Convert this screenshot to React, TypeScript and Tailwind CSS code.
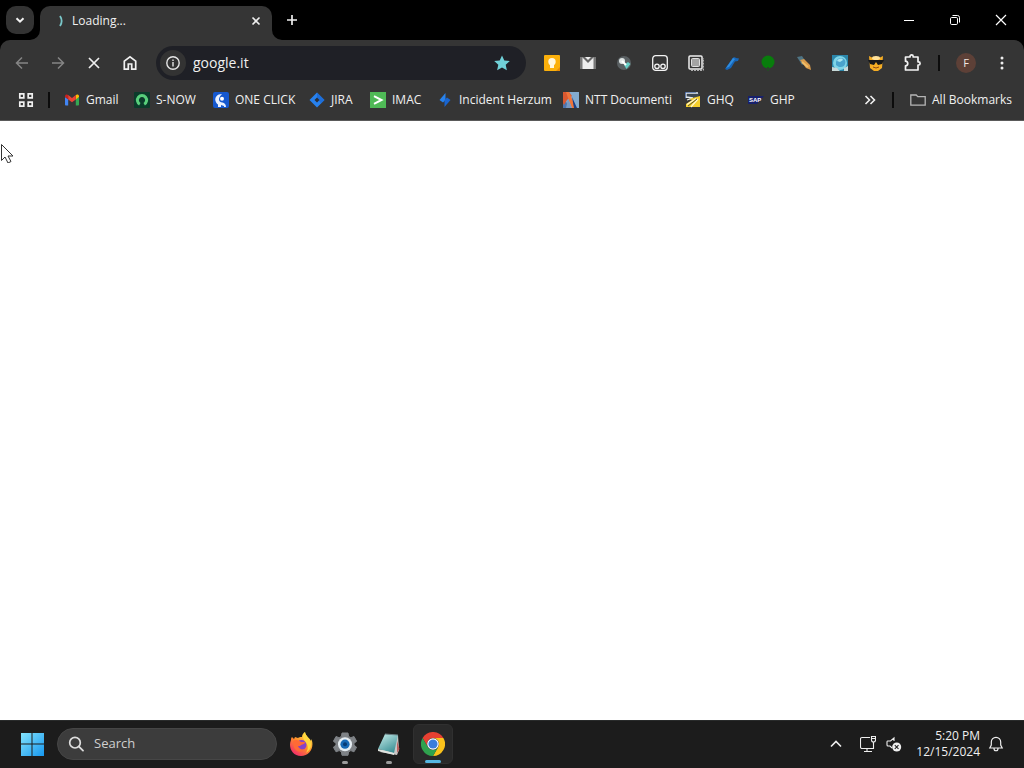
import type { ReactNode } from "react";

const icon = "block size-4 shrink-0";

function ChevronDown() {
  return (
    <svg className={icon} viewBox="0 0 16 16" fill="none" stroke="#f2f2f2" strokeWidth="2">
      <path d="M4.5 6.2 8 9.7l3.5-3.5" />
    </svg>
  );
}

function GmailIcon() {
  return (
    <svg className={icon} viewBox="0 0 16 16">
      <path d="M1 5v7.5c0 .5.4 1 1 1h2.2V7.2z" fill="#4285f4" />
      <path d="M15 5v7.5c0 .5-.4 1-1 1h-2.2V7.2z" fill="#34a853" />
      <path d="M1 5v-.8C1 2.5 3 2 4.2 3v4.4z" fill="#c5221f" />
      <path d="M15 5v-.8c0-1.7-2-2.2-3.2-1.2v4.4z" fill="#fbbc04" />
      <path d="M4.2 3 8 6l3.8-3v4.4L8 10.3 4.2 7.4z" fill="#ea4335" />
    </svg>
  );
}

function SnowIcon() {
  return (
    <svg className={icon} viewBox="0 0 16 16">
      <rect width="16" height="16" rx="1" fill="#0b3b2b" />
      <path d="M5.8 12.2a4.600 4.600 0 1 1 4.400 0" fill="none" stroke="#58cf7b" strokeWidth="3" />
    </svg>
  );
}

function OneClickIcon() {
  return (
    <svg className={icon} viewBox="0 0 16 16">
      <rect width="16" height="16" rx="2" fill="#1558cf" />
      <path d="M9 2C4 2 1.5 5.500 2.500 9c.6 2 1.500 3 2.500 3.500V15h3v-2l3 1v1h2c0-2.500-1.500-4-3.500-4.500C5.800 10.500 4.200 6.500 9 2" fill="#e9f1ff" />
      <circle cx="9" cy="6.800" r="2" fill="#fff" />
    </svg>
  );
}

function JiraIcon() {
  return (
    <svg className={icon} viewBox="0 0 16 16">
      <path d="M8 .5 15.5 8 8 15.500.5 8z" fill="#2781ee" />
      <path d="M8 .5 15.5 8 12 11.500 8 5.500z" fill="#1763cc" opacity=".6" />
      <path d="M8 5.500 10.500 8 8 10.500 5.500 8z" fill="#292e38" />
    </svg>
  );
}

function ImacIcon() {
  return (
    <svg className={icon} viewBox="0 0 16 16">
      <rect width="16" height="16" fill="#4fb956" />
      <path d="M4 4.200 11.500 8 4 11.800" fill="none" stroke="#fff" strokeWidth="2" />
    </svg>
  );
}

function HerzumIcon() {
  return (
    <svg className={icon} viewBox="0 0 16 16">
      <path d="M8.500 1v7L6 10.500 2.500 8z" fill="#2782ed" />
      <path d="M7.500 15V8L10 5.500l3.500 2.500z" fill="#1865d1" />
    </svg>
  );
}

function NttIcon() {
  return (
    <svg className={icon} viewBox="0 0 16 16">
      <rect width="16" height="16" fill="#83abd0" />
      <path d="M0 3 6 16H0z" fill="#4c74ae" />
      <path d="M0 0h6l3 4-5 4-3 5-1-2z" fill="#d95830" />
      <path d="M3 0h3l7 16H9L5 6z" fill="#ef743a" />
      <path d="M5 7 9 16H3z" fill="#7898c0" />
      <path d="M9 5 14 16h-3z" fill="#173e88" />
    </svg>
  );
}

function GhqIcon() {
  return (
    <svg className={icon} viewBox="0 0 16 16">
      <path d="M1 1h14l-3 5H1z" fill="#3c4650" />
      <path d="M1 6V1h12M1 5l7 1-6 2" fill="none" stroke="#e8edf1" strokeWidth="1.300" />
      <path d="M0 7V0h11" fill="none" stroke="#2455a8" />
      <path d="M4 7 15 4v11H1v-3l6-4z" fill="#f5cf2d" />
      <path d="m2 12.500 9-6M6 15l7-8" fill="none" stroke="#fff6cf" strokeWidth="1.200" />
      <path d="m3 14 9-7" fill="none" stroke="#5a5530" />
    </svg>
  );
}

function SapIcon() {
  return (
    <svg className={icon} viewBox="0 0 16 16">
      <path d="M0 4h16l-7 8H0z" fill="#17206c" />
      <text x="1" y="10" fill="#fff" fontSize="6" fontWeight="700" fontFamily="Liberation Sans, sans-serif">SAP</text>
    </svg>
  );
}

const bookmarks: { label: string; width: string; art: ReactNode }[] = [
  { label: "Gmail", width: "min-w-[70px]", art: <GmailIcon /> },
  { label: "S-NOW", width: "min-w-[79px]", art: <SnowIcon /> },
  { label: "ONE CLICK", width: "min-w-[96px]", art: <OneClickIcon /> },
  { label: "JIRA", width: "min-w-[61px]", art: <JiraIcon /> },
  { label: "IMAC", width: "min-w-[67px]", art: <ImacIcon /> },
  { label: "Incident Herzum", width: "min-w-[126px]", art: <HerzumIcon /> },
  { label: "NTT Documenti", width: "min-w-[122px]", art: <NttIcon /> },
  { label: "GHQ", width: "min-w-[63px]", art: <GhqIcon /> },
  { label: "GHP", width: "min-w-12", art: <SapIcon /> },
];

const extensions: { label: string; art: ReactNode }[] = [
  {
    label: "Keep",
    art: (
      <svg className={icon} viewBox="0 0 16 16">
        <rect width="16" height="16" rx="1" fill="#fbb00b" />
        <path d="M12 16h4v-4z" fill="#e88b05" />
        <circle cx="8" cy="6.800" r="3.700" fill="#fff7df" />
        <path d="M6 10h4v3H6z" fill="#fff7df" />
      </svg>
    ),
  },
  {
    label: "Mail checker",
    art: (
      <svg className={icon} viewBox="0 0 16 16">
        <rect y="2" width="16" height="12" rx="1" fill="#eee" />
        <path d="M0 2h2.500v12H0zM13.500 2H16v12h-2.500z" fill="#777" />
        <path d="M2 2h12L8 8z" fill="#666" />
        <path d="m5 2 3 3 3-3z" fill="#eee" />
      </svg>
    ),
  },
  {
    label: "Disc",
    art: (
      <svg className={icon} viewBox="0 0 16 16">
        <circle cx="8" cy="8" r="7" fill="#5a6063" />
        <circle cx="6" cy="6" r="3" fill="#dfe5e5" />
        <path d="m8 10 4-3 2.500 2-4 5z" fill="#65cfc7" />
        <path d="m6 6 4 4" stroke="#fff" strokeWidth="2" />
      </svg>
    ),
  },
  {
    label: "Recorder",
    art: (
      <svg className={icon} viewBox="0 0 16 16" fill="none" stroke="#f4f4f4" strokeWidth="1.300">
        <rect x=".7" y=".7" width="14.600" height="14.600" rx="3" />
        <circle cx="5" cy="11.300" r="2.200" />
        <circle cx="11" cy="11.300" r="2.200" />
      </svg>
    ),
  },
  {
    label: "Capture",
    art: (
      <svg className={icon} viewBox="0 0 16 16">
        <rect x="1" y="1" width="13" height="13" rx="1" fill="none" stroke="#eee" strokeWidth="1.500" />
        <rect x="3.500" y="3.500" width="8" height="8" rx="1" fill="#a3a3a3" stroke="#ddd" />
        <path d="M3 15.300h12.300V3" fill="none" stroke="#ccc" strokeDasharray="2 1" />
      </svg>
    ),
  },
  {
    label: "Marker",
    art: (
      <svg className={icon} viewBox="0 0 16 16">
        <path d="m1 14 7-10c1-2 3-2 4-1l3 .5-1 2.500-3 .5-4 6.500-4 2z" fill="#1765b6" />
        <path d="m2 13 7-10 2 1-6 8z" fill="#2f8de0" />
      </svg>
    ),
  },
  {
    label: "Status",
    art: (
      <svg className={icon} viewBox="0 0 16 16">
        <circle cx="8" cy="7" r="6.500" fill="#087d0c" />
        <path d="M7 12h2v4H7z" fill="#274728" />
      </svg>
    ),
  },
  {
    label: "Brush",
    art: (
      <svg className={icon} viewBox="0 0 16 16">
        <path d="m1 2 5-1 4 6-4 3z" fill="#4f7484" />
        <path d="m4 5 4-1 6 6 1 5-5-2z" fill="#d99a4a" />
        <path d="m6 7 6 5" stroke="#f0bd68" strokeWidth="2" />
      </svg>
    ),
  },
  {
    label: "Globe",
    art: (
      <svg className={icon} viewBox="0 0 16 16">
        <rect width="16" height="16" fill="#2b86aa" />
        <circle cx="8" cy="8" r="7" fill="#7ed5e8" />
        <path d="M4 7c1-4 5-5 8-3 2 2 2 4 0 7-3 2-6 1-8-1z" fill="#4aa3cc" />
        <path d="M5 6c2-3 5-3 6-1L8 7z" fill="#a8e5f0" />
        <path d="m0 12 5 1 3 3H0zM12 13l4-2v5h-4z" fill="#c7d8d8" />
      </svg>
    ),
  },
  {
    label: "Sunglasses",
    art: (
      <svg className={icon} viewBox="0 0 16 16">
        <path d="M1 1 5 3h6l4-2-1 12-4 3H6l-4-3z" fill="#f5ad24" />
        <ellipse cx="8" cy="3" rx="4" ry="2" fill="#ffe19a" />
        <path d="M0 5h16l-2 4-4 1-2-3-2 3-4-1z" fill="#17191b" />
        <path d="M5 12q3 2 6 0" fill="none" stroke="#8d4b14" />
      </svg>
    ),
  },
  {
    label: "Extensions",
    art: (
      <svg className="block size-5 shrink-0" viewBox="0 0 20 20" fill="none" stroke="#f3f3f3" strokeWidth="1.700" strokeLinejoin="round">
        <path d="M3.500 4H8v-.5a1.600 1.600 0 0 1 3.200 0V4H16v4.800h.5a1.600 1.600 0 0 1 0 3.200H16v5H3.500v-4.200c3 0 3-4.600 0-4.600z" />
      </svg>
    ),
  },
];

function TabStrip() {
  return (
    <header className="flex h-10 items-end bg-black">
      <button aria-label="Search tabs" className="mx-1.5 flex size-7 shrink-0 items-center justify-center self-center rounded-[10px] bg-[#333]">
        <ChevronDown />
      </button>
      <div className="relative flex h-[34px] w-[232px] items-center rounded-t-[10px] bg-[#353535] pb-1 pl-3 pr-2">
        <svg className="absolute bottom-0 -left-2.5 size-2.5" viewBox="0 0 10 10"><path d="M10 0v10H0A10 10 0 0 0 10 0" fill="#353535" /></svg>
        <svg className="absolute bottom-0 -right-2.5 size-2.5" viewBox="0 0 10 10"><path d="M0 0v10h10A10 10 0 0 1 0 0" fill="#353535" /></svg>
        <svg className="size-4" viewBox="0 0 16 16" fill="none" stroke="#79c6c8" strokeWidth="1.800">
          <path d="M8 3c2 3 2 7 0 10" />
        </svg>
        <span className="ml-1 text-xs text-[#f0f0f0]">Loading...</span>
        <button aria-label="Close tab" className="ml-auto flex size-4 items-center justify-center">
          <svg className={icon} viewBox="0 0 16 16" stroke="#eee" strokeWidth="1.600"><path d="m4.500 4.500 7 7m0-7-7 7" /></svg>
        </button>
      </div>
      <button aria-label="New tab" className="ml-1.5 flex size-7 shrink-0 items-center justify-center self-center">
        <svg className={icon} viewBox="0 0 16 16" stroke="#eee" strokeWidth="1.700"><path d="M3 8h10M8 3v10" /></svg>
      </button>
      <div className="ml-auto flex h-10 shrink-0">
        <button aria-label="Minimize" className="flex w-[46px] items-center justify-center">
          <svg className={icon} viewBox="0 0 16 16" stroke="#fff"><path d="M3 8.500h10" /></svg>
        </button>
        <button aria-label="Restore" className="flex w-[46px] items-center justify-center">
          <svg className={icon} viewBox="0 0 16 16" fill="none" stroke="#fff">
            <rect x="3.500" y="5.500" width="7" height="7" rx="1.200" /><path d="M5.500 3.500h5a2 2 0 0 1 2 2v5" />
          </svg>
        </button>
        <button aria-label="Close" className="flex w-[46px] items-center justify-center">
          <svg className={icon} viewBox="0 0 16 16" stroke="#fff" strokeWidth="1.200"><path d="m3 3 10 10m0-10L3 13" /></svg>
        </button>
      </div>
    </header>
  );
}

const navButton = "flex h-9 w-9 shrink-0 items-center justify-center";

function Toolbar() {
  return (
    <div className="flex h-[46px] items-center px-1">
      <button aria-label="Back" className={navButton}>
        <svg className={icon} viewBox="0 0 16 16" fill="none" stroke="#858585" strokeWidth="1.500"><path d="M14 8H2.500M8 2.500 2.500 8 8 13.500" /></svg>
      </button>
      <button aria-label="Forward" className={navButton}>
        <svg className={icon} viewBox="0 0 16 16" fill="none" stroke="#858585" strokeWidth="1.500"><path d="M2 8h11.500M8 2.500 13.500 8 8 13.500" /></svg>
      </button>
      <button aria-label="Stop" className={navButton}>
        <svg className={icon} viewBox="0 0 16 16" stroke="#eee" strokeWidth="1.700"><path d="m3 3 10 10m0-10L3 13" /></svg>
      </button>
      <button aria-label="Home" className={navButton}>
        <svg className={icon} viewBox="0 0 16 16" fill="none" stroke="#f0f0f0" strokeWidth="1.700"><path d="M2.300 6.200 8 1.800l5.700 4.400v7.900H9.700V9H6.300v5.100h-4z" /></svg>
      </button>
      <div className="mx-2 flex h-[34px] min-w-0 flex-1 items-center rounded-full bg-[#1f2026] pl-1 pr-4">
        <button aria-label="Site information" className="flex size-[26px] shrink-0 items-center justify-center rounded-full bg-[#333]">
          <svg className={icon} viewBox="0 0 16 16" fill="none" stroke="#e6e6e6" strokeWidth="1.400"><circle cx="8" cy="8" r="6.200" /><path d="M8 7v4.500M8 4.500V6" /></svg>
        </button>
        <input aria-label="Address" defaultValue="google.it" className="ml-[7px] min-w-0 flex-1 bg-transparent text-sm leading-5 text-[#f0f0f0] outline-none" />
        <button aria-label="Edit bookmark" className="shrink-0">
          <svg className={icon} viewBox="0 0 16 16" fill="#70d1d8"><path d="m8 .5 2.300 5 5.500.6-4.100 3.600 1.200 5.500L8 12.400l-4.900 2.800 1.200-5.500L.2 6.100l5.500-.6z" /></svg>
        </button>
      </div>
      {extensions.map((item) => (
        <button key={item.label} aria-label={item.label} className={navButton}>{item.art}</button>
      ))}
      <span className="mx-2 h-4 w-0.5 shrink-0 bg-[#0c0c0c]" />
      <button aria-label="Profile" className={navButton}>
        <span className="flex size-5 items-center justify-center rounded-full bg-[#5d4037] text-[11px] text-[#f3e7e3]">F</span>
      </button>
      <button aria-label="Menu" className={navButton}>
        <svg className={icon} viewBox="0 0 16 16" fill="#eee"><circle cx="8" cy="3" r="1.500" /><circle cx="8" cy="8" r="1.500" /><circle cx="8" cy="13" r="1.500" /></svg>
      </button>
    </div>
  );
}

function BookmarksBar() {
  return (
    <nav aria-label="Bookmarks" className="flex h-[34px] items-center pb-1.5 pl-[18px] pr-3 text-xs text-[#f0f0f0]">
      <button aria-label="Apps" className="shrink-0">
        <svg className={icon} viewBox="0 0 16 16" fill="none" stroke="#f0f0f0" strokeWidth="1.700">
          <path d="M1.800 1.800h4v4h-4zM10.200 1.800h4v4h-4zM1.800 10.200h4v4h-4zM10.200 10.200h4v4h-4z" />
        </svg>
      </button>
      <span className="mx-3.5 h-4 w-0.5 shrink-0 bg-[#0c0c0c]" />
      {bookmarks.map((item) => (
        <a key={item.label} href="#" className={"flex shrink-0 items-center gap-1.5 whitespace-nowrap " + item.width}>
          {item.art}
          {item.label}
        </a>
      ))}
      <button aria-label="More bookmarks" className="ml-auto shrink-0">
        <svg className={icon} viewBox="0 0 16 16" fill="none" stroke="#f0f0f0" strokeWidth="1.600"><path d="M3.500 4 7.500 8l-4 4M8.500 4l4 4-4 4" /></svg>
      </button>
      <span className="ml-3.5 mr-4 h-4 w-0.5 shrink-0 bg-[#0c0c0c]" />
      <button className="flex shrink-0 items-center gap-1.5 whitespace-nowrap">
        <svg className={icon} viewBox="0 0 16 16" fill="none" stroke="#b5b5b5" strokeWidth="1.300"><path d="M.8 13.200V3h5.400l1.600 1.700h7.400v8.500z" /></svg>
        All Bookmarks
      </button>
    </nav>
  );
}

function Taskbar() {
  return (
    <footer className="flex h-12 shrink-0 items-center bg-[#1c1c1c] text-[#f0f0f0] inset-shadow-[0_1px_#292b2b]">
      <button aria-label="Start" className="ml-5 shrink-0">
        <svg className="block size-6" viewBox="0 0 24 24">
          <defs><linearGradient id="start" x1="0" y1="0" x2="1" y2="1"><stop stopColor="#83e3fc" /><stop offset="1" stopColor="#1697ef" /></linearGradient></defs>
          <path d="M1 1h10.500v10.500H1zM12.500 1H24v10.500H12.500zM1 12.500h10.500V24H1zM12.500 12.500H24V24H12.500z" fill="url(#start)" />
        </svg>
      </button>
      <label className="ml-[13px] flex h-8 w-[220px] items-center rounded-full border border-[#464646] bg-[#3c3c3c] pl-2.5">
        <svg className={icon} viewBox="0 0 16 16" fill="none" stroke="#dedede" strokeWidth="1.700" strokeLinecap="round"><circle cx="7" cy="6.700" r="5.300" /><path d="m11 10.700 4 4" /></svg>
        <input aria-label="Search" placeholder="Search" className="ml-2.5 min-w-0 flex-1 bg-transparent text-[13px] outline-none placeholder:text-[#cfcfcf]" />
      </label>
      <div className="ml-0.5 flex h-full shrink-0">
        <button aria-label="Firefox" className="flex w-11 items-center justify-center">
          <svg className="block size-6" viewBox="0 0 24 24">
            <defs><linearGradient id="fox" x1=".85" y1="0" x2=".15" y2="1"><stop stopColor="#fff04a" /><stop offset=".5" stopColor="#ff8b2a" /><stop offset="1" stopColor="#f01f72" /></linearGradient></defs>
            <path d="M3 5c-1 1-1 2-1 3-3 7 1 16 10 16 8 0 13-8 11-15l-1-2v2c-1-3-5-4-6-9-2 1-3 3-3 5-2 0-3 0-4 1L6 5 5 7z" fill="url(#fox)" />
            <circle cx="12.500" cy="13" r="5" fill="#8642c8" />
            <path d="M4 9c3-2 6-1 8 1h4c0 2-2 2-4 3 0 1-2 1-3 1 1 3 4 4 7 3-3 4-8 3-10 0-2-2-1-5-2-8" fill="#ff6a35" />
            <path d="M16 0c0 4 6 6 6 13 0 3-2 6-5 8 3-5 2-8-1-12-2-2-3-5 0-9" fill="#ffd83e" />
          </svg>
        </button>
        <button aria-label="Settings" className="relative flex w-11 items-center justify-center">
          <svg className="block size-6" viewBox="0 0 24 24">
            <path d="m9 1-.6 3.400-2.200 1.300L3 4.500l-2.600 4.800L3 11.200v2L.4 15.200 3 19.800l3.200-1.200 2.200 1.300L9 23.300h6l.6-3.400 2.200-1.300 3.200 1.200 2.600-4.600-2.600-2v-2l2.600-1.900L21 4.500l-3.200 1.200-2.200-1.300L15 1z" fill="#7e8286" stroke="#7e8286" strokeLinejoin="round" />
            <circle cx="12" cy="12.200" r="7" fill="#e5edf2" />
            <circle cx="12" cy="12.200" r="4.600" fill="#1769b5" />
            <circle cx="12" cy="12.200" r="2" fill="#073b75" />
          </svg>
          <span className="absolute bottom-1 h-[3px] w-1.5 rounded-full bg-[#9b9b9b]" />
        </button>
        <button aria-label="Notepad" className="relative flex w-11 items-center justify-center">
          <svg className="block size-6" viewBox="0 0 24 24">
            <defs><linearGradient id="pad" x1=".2" y1="0" x2=".8" y2="1"><stop stopColor="#bde6e4" /><stop offset="1" stopColor="#338b91" /></linearGradient></defs>
            <path d="m3 20 17 3 2-5-1-15z" fill="#c8c6c5" />
            <path d="m20 9 2.500 8-2.500 4z" fill="#b9605e" />
            <path d="M8 2 21 3l-4 18L1 17z" fill="url(#pad)" />
            <path d="m1 17 16 4v2L1 19z" fill="#e1e4df" />
            <path d="M8 2 21 3" stroke="#687e82" />
          </svg>
          <span className="absolute bottom-1 h-[3px] w-1.5 rounded-full bg-[#9b9b9b]" />
        </button>
        <div className="flex w-11 items-center justify-center">
          <button aria-label="Google Chrome" className="relative flex h-10 w-10 shrink-0 items-center justify-center rounded-md border border-[#303030] bg-[#292929]">
            <svg className="block size-6" viewBox="0 0 24 24">
              <path d="M1.600 6A12 12 0 0 1 22.400 6H12a6 6 0 0 0-5.200 9z" fill="#e64032" />
              <path d="M22.400 6A12 12 0 0 1 12 24l5.200-9A6 6 0 0 0 12 6z" fill="#fbc21b" />
              <path d="M1.600 6 6.800 15a6 6 0 0 0 10.400 0L12 24A12 12 0 0 1 1.600 6" fill="#2fa24e" />
              <circle cx="12" cy="12" r="5.800" fill="#fff" /><circle cx="12" cy="12" r="4.600" fill="#397ddd" />
            </svg>
            <span className="absolute bottom-0 h-[3px] w-4 rounded-full bg-[#55b7e2]" />
          </button>
        </div>
      </div>
      <div className="ml-auto flex shrink-0 items-center pr-5">
        <button aria-label="Show hidden icons"><svg className={icon} viewBox="0 0 16 16" fill="none" stroke="#eee" strokeWidth="1.600"><path d="m3 10.500 5-5 5 5" /></svg></button>
        <button aria-label="Network" className="ml-4">
          <svg className={icon} viewBox="0 0 16 16" fill="none" stroke="#eee" strokeWidth="1.100">
            <path d="M10 1.500H2a1.500 1.500 0 0 0-1.500 1.500v8A1.500 1.500 0 0 0 2 12.500h11.500V7M7 12.500v3M4 15.500h8" />
            <path d="M11.500.5h4v3.500a2 2 0 0 1-4 0zM13.500 6v2M11.500 2.500h4" />
          </svg>
        </button>
        <button aria-label="Volume" className="ml-2.5">
          <svg className={icon} viewBox="0 0 16 16" fill="none" stroke="#eee" strokeWidth="1.100">
            <path d="M8 5V2L4.500 5H1.500Q1 5 1 6v3q0 1 1 1h2l2 2" /><circle cx="10.700" cy="11" r="4.500" fill="#f0f0f0" stroke="none" /><path d="m8.800 9.200 3.700 3.700m0-3.700-3.700 3.700" stroke="#222" />
          </svg>
        </button>
        <time className="ml-3.5 text-right text-xs leading-4">5:20 PM<br />12/15/2024</time>
        <button aria-label="Notifications" className="ml-2">
          <svg className={icon} viewBox="0 0 16 16" fill="none" stroke="#eee" strokeWidth="1.200"><path d="M3.300 9V6a4.700 4.700 0 0 1 9.400 0v3l1.500 3H1.800zM6 12.500c0 3 4 3 4 0" /></svg>
        </button>
      </div>
    </footer>
  );
}

export default function App() {
  return (
    <div className="flex min-h-screen flex-col bg-black font-['Open_Sans','Noto_Sans',sans-serif]">
      <TabStrip />
      <div className="rounded-t-[10px] border-b border-[#5a5a5a] bg-[#353535]">
        <Toolbar />
        <BookmarksBar />
      </div>
      <main className="relative flex-1 bg-white">
        <svg className="absolute left-0 top-[22px] h-5 w-3.5" viewBox="0 0 14 20">
          <path d="M1.500 1.500v16l3.500-3.500 3 6 3-1.500-3-5.500h5z" fill="#fff" stroke="#333" />
        </svg>
      </main>
      <Taskbar />
    </div>
  );
}
